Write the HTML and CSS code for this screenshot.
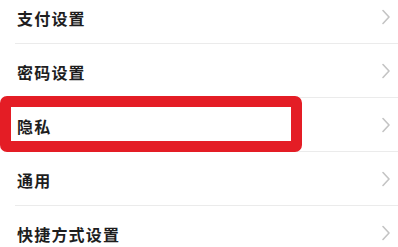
FILE: index.html
```html
<!DOCTYPE html>
<html lang="zh">
<head>
<meta charset="utf-8">
<link rel="stylesheet" href="styles.css">
</head>
<body>
<div class="list">
  <div class="row"><div class="row-inner"><span class="label">支付设置</span><svg class="chev" width="8" height="16" viewBox="0 0 8 16"><path d="M1 1.5 L7 8 L1 14.5" fill="none" stroke="#c4c4c4" stroke-width="1.6" stroke-linecap="round" stroke-linejoin="round"/></svg></div></div>
  <div class="row"><div class="row-inner"><span class="label">密码设置</span><svg class="chev" width="8" height="16" viewBox="0 0 8 16"><path d="M1 1.5 L7 8 L1 14.5" fill="none" stroke="#c4c4c4" stroke-width="1.6" stroke-linecap="round" stroke-linejoin="round"/></svg></div></div>
  <div class="row highlighted"><div class="row-inner"><span class="label">隐私</span><svg class="chev" width="8" height="16" viewBox="0 0 8 16"><path d="M1 1.5 L7 8 L1 14.5" fill="none" stroke="#c4c4c4" stroke-width="1.6" stroke-linecap="round" stroke-linejoin="round"/></svg></div><div class="mark"></div></div>
  <div class="row"><div class="row-inner"><span class="label">通用</span><svg class="chev" width="8" height="16" viewBox="0 0 8 16"><path d="M1 1.5 L7 8 L1 14.5" fill="none" stroke="#c4c4c4" stroke-width="1.6" stroke-linecap="round" stroke-linejoin="round"/></svg></div></div>
  <div class="row"><div class="row-inner"><span class="label">快捷方式设置</span><svg class="chev" width="8" height="16" viewBox="0 0 8 16"><path d="M1 1.5 L7 8 L1 14.5" fill="none" stroke="#c4c4c4" stroke-width="1.6" stroke-linecap="round" stroke-linejoin="round"/></svg></div></div>
</div>
</body>
</html>
```
FILE: styles.css
```css
html, body {
  margin: 0;
  padding: 0;
  background: #ffffff;
  overflow: hidden;
}
body {
  width: 398px;
  height: 247px;
  font-family: "Noto Sans CJK SC", "Noto Sans", sans-serif;
}
.list {
  margin-top: -10px;
}
.row {
  position: relative;
  height: 54px;
  padding-left: 15px;
  display: flex;
  box-sizing: border-box;
}
.row-inner {
  flex: 1;
  display: flex;
  align-items: center;
  justify-content: space-between;
  border-bottom: 1px solid #ebebeb;
  padding-left: 2px;
  padding-right: 8px;
  padding-top: 2px;
  box-sizing: border-box;
}
.label {
  font-size: 16px;
  font-weight: 700;
  color: #1e1e1e;
  letter-spacing: 1.2px;
}
.chev {
  display: block;
  margin-top: -2px;
}
.mark {
  position: absolute;
  left: 0;
  top: -2px;
  width: 302px;
  height: 56px;
  box-sizing: border-box;
  border: 11px solid #e41d25;
  border-radius: 7px;
}
```
